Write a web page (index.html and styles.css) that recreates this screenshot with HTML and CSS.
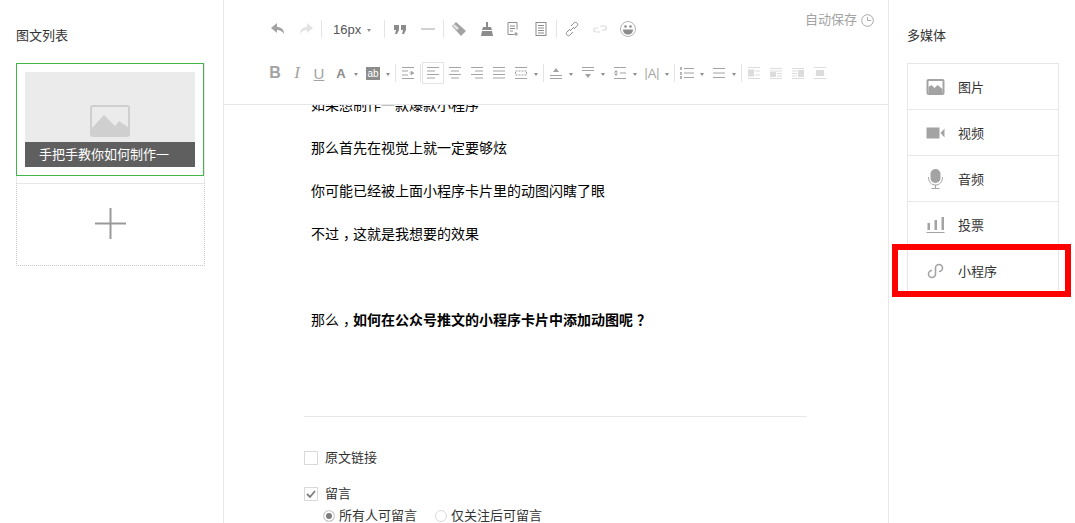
FILE: index.html
```html
<!DOCTYPE html>
<html lang="zh-CN">
<head>
  <meta charset="UTF-8">
  <meta name="viewport" content="width=device-width, initial-scale=1.0">
  <title>图文编辑</title>
  <link rel="stylesheet" href="styles.css">
</head>
<body>
  <div class="page">

    <!-- 图文列表 -->
    <aside class="left">
      <h2 class="side-title">图文列表</h2>
      <div class="article-list">
        <div class="article-card">
          <div class="cover">
            <svg class="cover-icon" width="40" height="32" viewBox="0 0 40 32"><rect x="1" y="1" width="38" height="30" rx="2" fill="none" stroke="#cfcfcf" stroke-width="2"/><path d="M2 30V23L14 10l11 11 4-5 9 6v8z" fill="#cfcfcf"/></svg>
            <div class="cover-title">手把手教你如何制作一</div>
          </div>
        </div>
      </div>
      <div class="article-add">
        <svg width="31" height="31" viewBox="0 0 31 31"><path d="M15.500 0v31M0 15.500h31" stroke="#9a9a9a" stroke-width="2"/></svg>
      </div>
    </aside>

    <!-- 编辑区 -->
    <main class="center">
      <div class="toolbar">
        <div class="tool-row row-one">
          <span class="tool wide"><svg width="16" height="16" viewBox="0 0 16 16"><path d="M7 2 1 7l6 5V9c3 0 5 1 7 4 0-5-3-7-7-7z" fill="#a3a3a3"/></svg></span>
          <span class="tool wide"><svg width="16" height="16" viewBox="0 0 16 16"><path d="M9 2l6 5-6 5V9c-3 0-5 1-7 4 0-5 3-7 7-7z" fill="#e2e2e2"/></svg></span>
          <span class="sep"></span>
          <span class="font-size">16px</span>
          <span class="caret"></span>
          <span class="sep sep-font"></span>
          <span class="tool wide"><svg width="16" height="16" viewBox="0 0 16 16"><path d="M2 4h5v5l-2 4H3l1-4H2zM9 4h5v5l-2 4h-2l1-4H9z" fill="#8c8c8c"/></svg></span>
          <span class="tool wide"><svg width="16" height="16" viewBox="0 0 16 16"><path d="M1 8h14" stroke="#a3a3a3"/></svg></span>
          <span class="sep"></span>
          <span class="tool wide"><svg width="16" height="16" viewBox="0 0 16 16"><path d="M5 1 1 5l9 10 5-5z" fill="#a3a3a3"/><path d="M3 3l-1 2 4 4 2-2z" fill="#e4e4e4"/></svg></span>
          <span class="tool wide"><svg width="16" height="16" viewBox="0 0 16 16"><path d="M7 1h2v5h3l1 3H3l1-3h3zM3 10h10l1 5H2z" fill="#8c8c8c"/></svg></span>
          <span class="tool wide tight"><svg width="16" height="16" viewBox="0 0 16 16"><path d="M3 1.500h9v7M3 1.500v12h6M5 5h5M5 7.500h5M5 10h3M11 11v4M9 13h4" fill="none" stroke="#8c8c8c"/></svg></span>
          <span class="tool wide"><svg width="16" height="16" viewBox="0 0 16 16"><rect x="3" y="1.500" width="10" height="13" fill="none" stroke="#8c8c8c"/><path d="M5 4.500h6M5 7h6M5 9.500h6M5 12h6" stroke="#8c8c8c"/></svg></span>
          <span class="sep"></span>
          <span class="tool wide"><svg width="16" height="16" viewBox="0 0 16 16"><path d="M7 5l3-3c1-1 2-1 3 0s1 2 0 3l-3 3M9 11l-3 3c-1 1-2 1-3 0s-1-2 0-3l3-3M6 10l4-4" fill="none" stroke="#8c8c8c"/></svg></span>
          <span class="tool wide"><svg width="18" height="16" viewBox="0 0 18 16"><path d="M9 5h4c3 0 3 4 0 4h-2M9 11H5c-3 0-3-4 0-4h2" fill="none" stroke="#dcdcdc" stroke-width="1.200"/></svg></span>
          <span class="tool wide"><svg width="18" height="18" viewBox="0 0 18 18"><circle cx="9" cy="9" r="7.500" fill="#fff" stroke="#b5b5b5"/><circle cx="6.500" cy="6.500" r="1.300" fill="#8c8c8c"/><circle cx="11.500" cy="6.500" r="1.300" fill="#8c8c8c"/><path d="M4 9.500h10c0 3-2 5-5 5s-5-2-5-5z" fill="#8c8c8c"/></svg></span>
          <span class="autosave">自动保存
            <svg width="13" height="13" viewBox="0 0 13 13"><circle cx="6.500" cy="6.500" r="5.800" fill="none" stroke="#a8a8a8"/><path d="M6.500 3v3.500H10" fill="none" stroke="#a8a8a8"/></svg>
          </span>
        </div>
        <div class="tool-row row-two">
          <span class="tool glyph bold">B</span>
          <span class="tool glyph italic">I</span>
          <span class="tool glyph under">U</span>
          <span class="tool glyph bold small">A</span><span class="caret"></span>
          <span class="tool"><span class="ab">ab</span></span><span class="caret"></span>
          <span class="sep"></span>
          <span class="tool"><svg width="14" height="14" viewBox="0 0 14 14"><path d="M1 1.500h12M1 12.500h12M1 5h6M1 9h6" stroke="#a3a3a3"/><path d="M8 7h3M10 5l3 2-3 2z" fill="#a3a3a3" stroke="#a3a3a3" stroke-width=".5"/></svg></span>
          <span class="sep"></span>
          <span class="tool active"><svg width="14" height="14" viewBox="0 0 14 14"><path d="M1 1.500h12M1 5h8M1 8.500h12M1 12h8" stroke="#a3a3a3"/></svg></span>
          <span class="tool"><svg width="14" height="14" viewBox="0 0 14 14"><path d="M1 1.500h12M3 5h8M1 8.500h12M3 12h8" stroke="#a3a3a3"/></svg></span>
          <span class="tool"><svg width="14" height="14" viewBox="0 0 14 14"><path d="M1 1.500h12M5 5h8M1 8.500h12M5 12h8" stroke="#a3a3a3"/></svg></span>
          <span class="tool"><svg width="14" height="14" viewBox="0 0 14 14"><path d="M1 1.500h12M1 5h12M1 8.500h12M1 12h12" stroke="#a3a3a3"/></svg></span>
          <span class="tool"><svg width="14" height="14" viewBox="0 0 14 14"><path d="M1 1.500h12M1 12.500h12" stroke="#a3a3a3"/><rect x="1.500" y="5" width="11" height="4" fill="none" stroke="#a3a3a3" stroke-dasharray="2 1"/></svg></span><span class="caret"></span>
          <span class="sep"></span>
          <span class="tool"><svg width="14" height="14" viewBox="0 0 14 14"><path d="M1 9.500h12M1 12.500h12" stroke="#a3a3a3"/><path d="M7 2l3 4H4z" fill="#a3a3a3"/></svg></span><span class="caret"></span>
          <span class="tool"><svg width="14" height="14" viewBox="0 0 14 14"><path d="M1 1.500h12M1 4.500h12" stroke="#a3a3a3"/><path d="M7 12l3-4H4z" fill="#a3a3a3"/></svg></span><span class="caret"></span>
          <span class="tool"><svg width="14" height="14" viewBox="0 0 14 14"><path d="M1 1.500h12M1 12.500h12M7 7h6" stroke="#a3a3a3"/><path d="M3 4l2 2.500H1zM3 10l2-2.500H1z" fill="#a3a3a3"/></svg></span><span class="caret"></span>
          <span class="tool glyph letter"><i>|</i>A<i>|</i></span><span class="caret"></span>
          <span class="sep"></span>
          <span class="tool"><svg width="16" height="14" viewBox="0 0 16 14"><path d="M5 2.500h10M5 7h10M5 11.500h10" stroke="#a3a3a3"/><path d="M1 1h2v3H1zM1 6h2v3H1zM1 10h2v3H1z" fill="#b5b5b5"/></svg></span><span class="caret"></span>
          <span class="tool"><svg width="14" height="14" viewBox="0 0 14 14"><path d="M1 2.500h12M1 7h12M1 11.500h12" stroke="#a3a3a3"/></svg></span><span class="caret"></span>
          <span class="sep"></span>
          <span class="tool"><svg width="14" height="14" viewBox="0 0 14 14"><path d="M1 1.500h12M1 12.500h12M8 5h5M8 9h5" stroke="#dcdcdc"/><rect x="1" y="3.500" width="6" height="7" fill="#dcdcdc"/></svg></span>
          <span class="tool"><svg width="14" height="14" viewBox="0 0 14 14"><path d="M1 2.500h12M1 5h12M8 7.500h5M8 10h5M1 12.500h12" stroke="#dcdcdc"/><rect x="1" y="6" width="6" height="5" fill="#dcdcdc"/></svg></span>
          <span class="tool"><svg width="14" height="14" viewBox="0 0 14 14"><path d="M1 2.500h12M1 5h5M1 7.500h5M1 10h5M1 12.500h12" stroke="#dcdcdc"/><rect x="7" y="4" width="6" height="7" fill="#dcdcdc"/></svg></span>
          <span class="tool"><svg width="14" height="14" viewBox="0 0 14 14"><path d="M1 1.500h12M1 12.500h12" stroke="#dcdcdc"/><rect x="3" y="4" width="8" height="6" fill="#dcdcdc"/></svg></span>
        </div>
      </div>

      <div class="editor">
        <div class="content">
          <p>如果想制作一款爆款小程序</p>
          <p>那么首先在视觉上就一定要够炫</p>
          <p>你可能已经被上面小程序卡片里的动图闪瞎了眼</p>
          <p>不过<span class="punct">，</span>这就是我想要的效果</p>
          <p>&nbsp;</p>
          <p>那么<span class="punct">，</span><strong>如何在公众号推文的小程序卡片中添加动图呢<span class="punct">？</span></strong></p>
        </div>
        <div class="options">
          <div class="option">
            <span class="checkbox"></span>
            <span>原文链接</span>
          </div>
          <div class="option comment">
            <span class="checkbox">
              <svg width="10" height="10" viewBox="0 0 10 10"><path d="M1 5l3 3 5-6" fill="none" stroke="#7d7d7d" stroke-width="1.800"/></svg>
            </span>
            <span>留言</span>
          </div>
          <div class="radios">
            <span class="radio on"></span><span class="radio-label">所有人可留言</span>
            <span class="radio"></span><span class="radio-label">仅关注后可留言</span>
          </div>
        </div>
      </div>
    </main>

    <!-- 多媒体 -->
    <aside class="right">
      <h2 class="side-title">多媒体</h2>
      <ul class="media-list">
        <li class="media-item">
          <svg width="18" height="16" viewBox="0 0 18 16"><rect x="1" y="1" width="16" height="14" rx="1" fill="#fff" stroke="#a3a3a3" stroke-width="2"/><path d="M2 14V8l3-2 3 3 3-3 5 4v4z" fill="#a3a3a3"/></svg>
          <span>图片</span>
        </li>
        <li class="media-item">
          <svg width="18" height="12" viewBox="0 0 18 12"><rect y=".5" width="13" height="11" fill="#a3a3a3"/><path d="M14 6l4-4.500v9z" fill="#a3a3a3"/></svg>
          <span>视频</span>
        </li>
        <li class="media-item">
          <svg width="18" height="20" viewBox="0 0 18 20"><rect x="4" y="0" width="10" height="14" rx="5" fill="#a3a3a3"/><path d="M2 8c0 5 3 8 7 8s7-3 7-8M9 16v3M5 19.500h8" fill="none" stroke="#a3a3a3"/></svg>
          <span>音频</span>
        </li>
        <li class="media-item">
          <svg width="18" height="17" viewBox="0 0 18 17"><path d="M1 7h2.500v7H1zM8 4h2.500v10H8zM15 1h2.500v13H15z" fill="#a3a3a3"/><path d="M0 16.500h18" stroke="#a3a3a3"/></svg>
          <span>投票</span>
        </li>
        <li class="media-item">
          <svg width="18" height="16" viewBox="0 0 18 16"><path d="M5.500 7.500A3.500 3.500 0 1 0 9 11V5a3.500 3.500 0 1 1 3.500 3.500" fill="none" stroke="#a3a3a3" stroke-width="1.600"/></svg>
          <span>小程序</span>
        </li>
      </ul>
      <div class="highlight"></div>
    </aside>

  </div>
</body>
</html>
```

FILE: styles.css
```css
* {
  margin: 0;
  padding: 0;
  box-sizing: border-box;
}

body {
  font-family: "Liberation Sans", "Noto Sans CJK SC", sans-serif;
  font-size: 13px;
  color: #222;
  background-color: #fff;
  overflow: hidden;
}

.page {
  display: flex;
  height: 523px;
  overflow: hidden;
}

.side-title {
  font-size: 13px;
  font-weight: normal;
  line-height: 20px;
  color: #333;
}

/* 左栏 */
.left {
  width: 224px;
  flex-shrink: 0;
  padding: 26px 18px 0 16px;
  border-right: 1px solid #e7e7eb;
}

.article-list {
  margin-top: 17px;
  padding-bottom: 7px;
  border: solid #e7e7eb;
  border-width: 0 1px;
}

.article-card {
  margin: 0 0 0 -1px;
  height: 113px;
  padding: 8px;
  border: 1px solid #44b549;
}

.cover {
  height: 95px;
  background-color: #ebebeb;
  display: flex;
  flex-direction: column;
  align-items: center;
  justify-content: flex-end;
}

.cover-icon {
  margin-bottom: 5px;
}

.cover-title {
  width: 100%;
  height: 25px;
  line-height: 25px;
  padding-left: 14px;
  color: #fff;
  background-color: #5f5f5f;
}

.article-add {
  height: 83px;
  padding-bottom: 3px;
  display: flex;
  align-items: center;
  justify-content: center;
  border: 1px dotted #c8c8c8;
  border-top: 1px solid #e7e7eb;
}

/* 工具栏 */
.center {
  width: 665px;
  flex-shrink: 0;
  border-right: 1px solid #e7e7eb;
  display: flex;
  flex-direction: column;
}

.toolbar {
  height: 105px;
  padding: 7px 14px 0 40px;
  border-bottom: 1px solid #e7e7eb;
}

.tool-row {
  display: flex;
  align-items: center;
  height: 44px;
}

.tool {
  width: 22px;
  height: 22px;
  display: flex;
  align-items: center;
  justify-content: center;
  flex-shrink: 0;
}

.tool.wide {
  width: 28px;
}

.tool.tight {
  margin-left: -2px;
}

.tool.active {
  border: 1px solid #e4e4e4;
}

.sep {
  width: 1px;
  height: 18px;
  margin: 0 1px;
  background-color: #e4e4e4;
  flex-shrink: 0;
}

.sep-font {
  margin: 0 1px 0 9px;
}

.font-size {
  margin-left: 10px;
  width: 32px;
  font-size: 13px;
  color: #555;
}

.caret {
  width: 10px;
  height: 0;
  flex-shrink: 0;
}

.caret::after {
  content: "";
  display: block;
  width: 0;
  margin-left: 2px;
  border: 2.500px solid transparent;
  border-top: 3px solid #8c8c8c;
  border-bottom: 0;
}

.glyph {
  font-size: 15px;
  color: #a3a3a3;
  font-family: "Liberation Sans", sans-serif;
}

.bold {
  font-weight: bold;
  font-size: 16px;
}

.small {
  font-size: 13px;
  color: #8c8c8c;
}

.italic {
  font-family: "Liberation Serif", serif;
  font-style: italic;
  font-size: 17px;
}

.under {
  font-size: 15px;
  text-decoration: underline;
}

.letter {
  font-size: 13px;
}

.letter i {
  font-style: normal;
  font-size: 12px;
}

.ab {
  width: 14px;
  height: 13px;
  line-height: 13px;
  font-size: 10px;
  text-align: center;
  color: #fff;
  background-color: #8c8c8c;
}

.autosave {
  align-self: flex-start;
  margin-left: auto;
  padding-top: 3px;
  color: #a3a3a3;
  line-height: 20px;
  display: flex;
  align-items: center;
  gap: 4px;
}

/* 正文 */
.editor {
  flex: 1;
  overflow: hidden;
  padding: 0 81px 0 80px;
}

.content {
  margin-top: -12px;
  padding: 0 7px 65px;
  border-bottom: 1px solid #e7e7eb;
  font-size: 14px;
  color: #000;
}

.content p {
  line-height: 24px;
  margin-bottom: 19px;
}

/* 全角标点在格子里居中 */
.punct {
  font-feature-settings: "halt";
  padding: 0 3px 0 4px;
}

.options {
  padding-top: 34px;
}

.option {
  display: flex;
  align-items: center;
  gap: 7px;
  height: 14px;
  line-height: 14px;
  color: #333;
}

.comment {
  margin-top: 22px;
}

.checkbox {
  width: 14px;
  height: 14px;
  border: 1px solid #d9d9d9;
  display: flex;
  align-items: center;
  justify-content: center;
}

.radios {
  display: flex;
  align-items: center;
  margin-top: 7px;
  padding-left: 19px;
  color: #333;
  line-height: 16px;
}

.radio {
  width: 12px;
  height: 12px;
  border: 1px solid #d9d9d9;
  border-radius: 50%;
  margin-right: 4px;
}

.radio.on {
  background-color: #7d7d7d;
  box-shadow: inset 0 0 0 2px #fff;
}

.radio-label {
  margin-right: 18px;
}

/* 右栏 */
.right {
  flex: 1;
  padding: 26px 16px 0 18px;
  position: relative;
}

.media-list {
  list-style: none;
  margin-top: 17px;
  border: 1px solid #e7e7eb;
}

.media-item {
  height: 46px;
  display: flex;
  align-items: center;
  gap: 13px;
  padding-left: 18px;
  border-bottom: 1px solid #e7e7eb;
  color: #333;
}

.media-item svg {
  width: 19px;
}

.highlight {
  position: absolute;
  left: 3px;
  top: 244px;
  width: 179px;
  height: 53px;
  border: 6px solid #f00;
}
```
